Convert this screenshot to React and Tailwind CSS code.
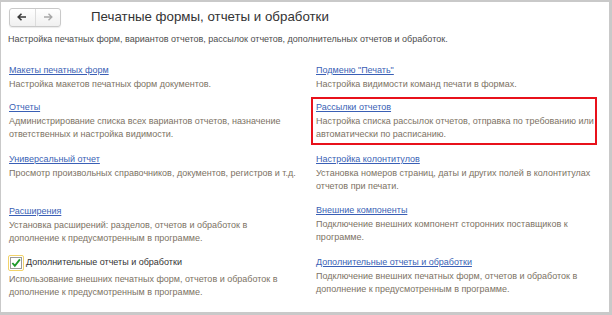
import React from "react";

const F = { fontFamily: '"Liberation Sans", Arial, sans-serif' };

function Item({ title, desc, boxed }) {
  return (
    <div className={boxed ? "relative" : ""}>
      {boxed && (
        <div className="absolute left-[-5px] top-[-4px] w-[286px] h-[48px] border-2 border-[#e8111b]" />
      )}
      <div className="text-[9px] leading-[13px] text-[#3a5fb5] underline underline-offset-[1px]">{title}</div>
      <div className="mt-[1px] text-[9px] leading-[13px] text-[#7c7264]">{desc}</div>
    </div>
  );
}

export default function App() {
  return (
    <div style={F} className="w-[612px] h-[315px] bg-white border-t-2 border-l border-r-[3px] border-b-[3px] border-[#c9c9c9] box-border overflow-hidden relative">
      <div className="flex items-center h-[30px] pl-[8px]">
        <div className="flex h-[19px] w-[52px] border border-[#c9c9c9] rounded-[3px] bg-gradient-to-b from-white to-[#f0f0f0] shadow-[0_1px_1px_rgba(0,0,0,0.08)]">
          <div className="flex-1 flex items-center justify-center border-r border-[#dcdcdc]">
            <svg width="10" height="8" viewBox="0 0 10 8"><path d="M1 4h8M4.5 0.8L1.2 4l3.3 3.2" stroke="#3a3a3a" strokeWidth="1.6" fill="none"/></svg>
          </div>
          <div className="flex-1 flex items-center justify-center">
            <svg width="10" height="8" viewBox="0 0 10 8"><path d="M1 4h8M5.5 0.8L8.8 4l-3.3 3.2" stroke="#a8a8a8" strokeWidth="1.4" fill="none"/></svg>
          </div>
        </div>
        <div className="ml-[30px] text-[13.3px] text-[#333] leading-none">Печатные формы, отчеты и обработки</div>
      </div>
      <div className="pl-[7px] mt-[1px] text-[9px] leading-[13px] text-[#4d4d4d]">
        Настройка печатных форм, вариантов отчетов, рассылок отчетов, дополнительных отчетов и обработок.
      </div>
      <div className="grid grid-cols-[307px_290px] mt-[18px] pl-[8px]">
        <div className="flex flex-col">
          <Item title="Макеты печатных форм" desc="Настройка макетов печатных форм документов." />
          <div className="h-[10px]" />
          <Item title="Отчеты" desc={<>Администрирование списка всех вариантов отчетов, назначение<br />ответственных и настройка видимости.</>} />
          <div className="h-[12px]" />
          <Item title="Универсальный отчет" desc="Просмотр произвольных справочников, документов, регистров и т.д." />
          <div className="h-[25px]" />
          <Item title="Расширения" desc={<>Установка расширений: разделов, отчетов и обработок в<br />дополнение к предусмотренным в программе.</>} />
          <div className="h-[10px]" />
          <div className="flex items-center h-[15px]">
            <div className="w-[16px] h-[16px] border border-[#f2d36b] rounded-[2px] flex items-center justify-center -ml-[1px]">
              <div className="w-[12px] h-[12px] border border-[#9a9a9a] bg-white flex items-center justify-center">
                <svg width="11" height="10" viewBox="0 0 11 10"><path d="M1.5 5l2.7 3L9.8 1" stroke="#1e9a2a" strokeWidth="2" fill="none"/></svg>
              </div>
            </div>
            <span className="ml-[2px] text-[9px] leading-[13px] text-[#333]">Дополнительные отчеты и обработки</span>
          </div>
          <div className="mt-[3px] text-[9px] leading-[13px] text-[#7c7264]">
            Использование внешних печатных форм, отчетов и обработок в<br />дополнение к предусмотренным в программе.
          </div>
        </div>
        <div className="flex flex-col">
          <Item title="Подменю &quot;Печать&quot;" desc="Настройка видимости команд печати в формах." />
          <div className="h-[10px]" />
          <Item boxed title="Рассылки отчетов" desc={<>Настройка списка рассылок отчетов, отправка по требованию или<br />автоматически по расписанию.</>} />
          <div className="h-[12px]" />
          <Item title="Настройка колонтитулов" desc={<>Установка номеров страниц, даты и других полей в колонтитулах<br />отчетов при печати.</>} />
          <div className="h-[11px]" />
          <Item title="Внешние компоненты" desc={<>Подключение внешних компонент сторонних поставщиков к<br />программе.</>} />
          <div className="h-[12px]" />
          <Item title="Дополнительные отчеты и обработки" desc={<>Подключение внешних печатных форм, отчетов и обработок в<br />дополнение к предусмотренным в программе.</>} />
        </div>
      </div>
    </div>
  );
}
